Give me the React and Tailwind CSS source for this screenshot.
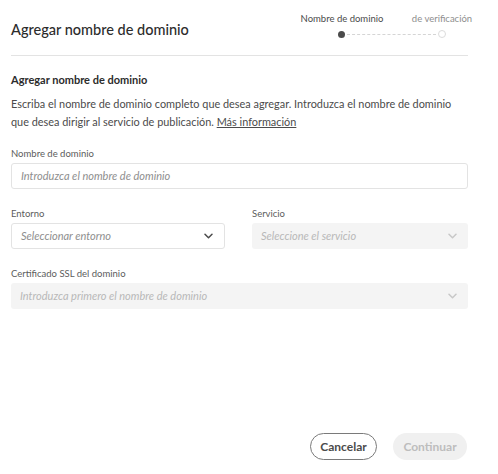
import React from "react";

function Chevron({ className }) {
  return (
    <svg width="9" height="6" viewBox="0 0 9 6" className={className} fill="none">
      <path d="M1 1.2l3.5 3.5 3.5-3.5" stroke="currentColor" strokeWidth="1.5" strokeLinecap="round" strokeLinejoin="round" />
    </svg>
  );
}

export default function App() {
  return (
    <div className="w-[498px] h-[474px] bg-white flex flex-col px-[11px] overflow-hidden" style={{ fontFamily: "Lato, 'Open Sans', sans-serif" }}>
      <div className="w-[457px] flex flex-col">
        <div className="h-[55px] flex items-center">
          <h1 className="text-[14.5px] leading-[20px] text-[#2c2c2c] font-medium mt-[4px]">Agregar nombre de dominio</h1>
          <div className="ml-auto mr-[-24px] w-[200px] flex flex-col self-start pt-[12px]">
            <div className="grid grid-cols-2 text-[9.5px] leading-[13px] text-center">
              <span className="text-[#4b4b4b]">Nombre de dominio</span>
              <span className="text-[#8e8e8e]">de verificación</span>
            </div>
            <div className="flex items-center h-[10px] mt-[4px] px-[46px]">
              <span className="w-[7px] h-[7px] rounded-full bg-[#4b4b4b] shrink-0" />
              <span className="flex-1 border-t border-dashed border-[#d5d5d5] mx-[2px]" />
              <span className="w-[8px] h-[8px] rounded-full border border-[#dcdcdc] shrink-0" />
            </div>
          </div>
        </div>
        <div className="h-px bg-[#e3e3e3]" />

        <h2 className="mt-[16px] text-[11px] leading-[16px] font-bold text-[#2c2c2c]">Agregar nombre de dominio</h2>
        <p className="mt-[7px] text-[10.9px] leading-[18px] text-[#4b4b4b] whitespace-nowrap">
          Escriba el nombre de dominio completo que desea agregar. Introduzca el nombre de dominio
          <br />
          que desea dirigir al servicio de publicación.{" "}
          <a className="underline text-[#4b4b4b]">Más información</a>
        </p>

        <label className="mt-[16px] text-[9.5px] leading-[14px] text-[#5c5c5c]">Nombre de dominio</label>
        <div className="mt-[2px] h-[26px] rounded-[3px] border border-[#e3e3e3] flex items-center px-[9px]">
          <span className="italic text-[11px] text-[#8e8e8e]">Introduzca el nombre de dominio</span>
        </div>

        <div className="mt-[18px] grid grid-cols-[214px_216px] gap-x-[27px]">
          <div className="flex flex-col">
            <label className="text-[9.5px] leading-[14px] text-[#5c5c5c]">Entorno</label>
            <div className="mt-[2px] h-[26px] rounded-[3px] border border-[#e3e3e3] flex items-center pl-[9px] pr-[11px]">
              <span className="italic text-[11px] text-[#8e8e8e]">Seleccionar entorno</span>
              <Chevron className="ml-auto text-[#4b4b4b]" />
            </div>
          </div>
          <div className="flex flex-col">
            <label className="text-[9.5px] leading-[14px] text-[#5c5c5c]">Servicio</label>
            <div className="mt-[2px] h-[26px] rounded-[3px] bg-[#f4f4f4] flex items-center pl-[9px] pr-[11px]">
              <span className="italic text-[11px] text-[#b8b8b8]">Seleccione el servicio</span>
              <Chevron className="ml-auto text-[#c8c8c8]" />
            </div>
          </div>
        </div>

        <label className="mt-[18px] text-[9.5px] leading-[14px] text-[#5c5c5c]">Certificado SSL del dominio</label>
        <div className="mt-[2px] h-[26px] rounded-[3px] bg-[#f4f4f4] flex items-center pl-[9px] pr-[11px]">
          <span className="italic text-[11px] text-[#b8b8b8]">Introduzca primero el nombre de dominio</span>
          <Chevron className="ml-auto text-[#c8c8c8]" />
        </div>
      </div>

      <div className="mt-auto mb-[14px] w-[456px] flex justify-end gap-[16px]">
        <button className="h-[27px] w-[67px] rounded-full border-[1.5px] border-[#7a7a7a] text-[12px] font-bold text-[#4b4b4b]">Cancelar</button>
        <button className="h-[27px] w-[74px] rounded-full bg-[#f0f0f0] text-[12px] font-bold text-[#bdbdbd]">Continuar</button>
      </div>
    </div>
  );
}
